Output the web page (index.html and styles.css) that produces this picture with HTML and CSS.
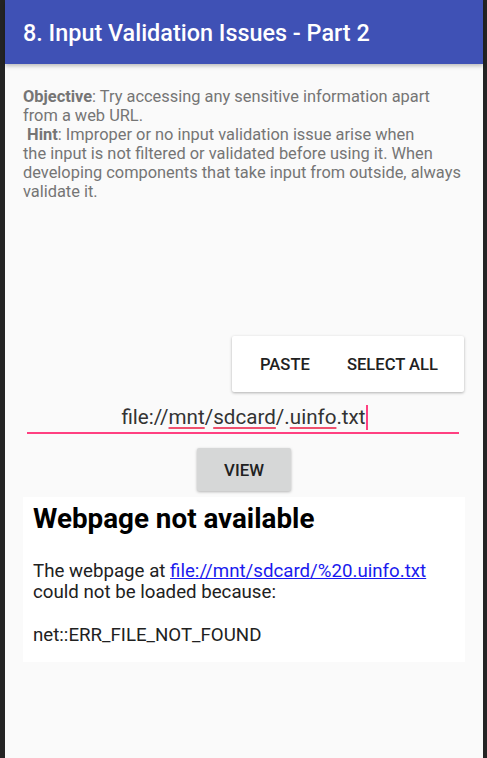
FILE: index.html
```html
<!DOCTYPE html>
<html>
<head>
<meta charset="utf-8">
<link rel="stylesheet" href="styles.css">
</head>
<body>
<div class="frame">
  <div class="app">
    <header class="appbar">
      <h1 class="title">8. Input Validation Issues - Part 2</h1>
    </header>
    <main class="content">
      <p class="desc"><b>Objective</b>: Try accessing any sensitive information apart<br>from a web URL.<br>&nbsp;<b>Hint</b>: Improper or no input validation issue arise when<br>the input is not filtered or validated before using it. When<br>developing components that take input from outside, always<br>validate it.</p>
      <div class="menu-row">
        <div class="menu">
          <span class="menu-item">PASTE</span>
          <span class="menu-item">SELECT ALL</span>
        </div>
      </div>
      <div class="field">
        <span class="field-text">file://<span class="spell">mnt</span>/<span class="spell">sdcard</span>/.<span class="spell">uinfo</span>.txt</span><span class="cursor"></span>
      </div>
      <div class="btn-row">
        <button class="btn">VIEW</button>
      </div>
      <section class="webview">
        <h2 class="wv-title">Webpage not available</h2>
        <p class="wv-text wv-first">The webpage at <a class="wv-link" href="#">file://mnt/sdcard/%20.uinfo.txt</a><br>could not be loaded because:</p>
        <p class="wv-text">net::ERR_FILE_NOT_FOUND</p>
      </section>
    </main>
  </div>
</div>
</body>
</html>
```

FILE: styles.css
```css
html, body {
  margin: 0;
  padding: 0;
  height: 100%;
}
body {
  background: #242424;
  font-family: Roboto, "Noto Sans", sans-serif;
}
.frame {
  display: flex;
  height: 758px;
  padding-left: 5px;
}
.app {
  width: 478px;
  background: #fafafa;
  display: flex;
  flex-direction: column;
}
.appbar {
  height: 64px;
  background: #3f51b5;
  display: flex;
  align-items: center;
  padding-left: 18px;
  box-shadow: 0 2px 4px rgba(0,0,0,0.25);
  position: relative;
  z-index: 1;
}
.title {
  margin: 0;
  color: #fff;
  font-size: 23.4px;
  font-weight: 500;
  padding-top: 2px;
}
.content {
  display: flex;
  flex-direction: column;
  padding: 0 18px;
}
.desc {
  margin: 23px 0 0 0;
  color: #757575;
  font-size: 16.4px;
  line-height: 19px;
}
.desc b {
  font-weight: 700;
}
.menu-row {
  display: flex;
  justify-content: flex-end;
  margin-top: 135px;
  padding-right: 1px;
}
.menu {
  width: 232px;
  height: 56px;
  background: #fff;
  box-shadow: 0 1px 3px rgba(0,0,0,0.3);
  border-radius: 2px;
  display: flex;
  align-items: center;
  padding-left: 28px;
  gap: 37px;
  box-sizing: border-box;
}
.menu-item {
  font-size: 16.6px;
  font-weight: 500;
  color: #212121;
  padding-top: 1px;
}
.field {
  margin: 8px 6px 0 4px;
  height: 28px;
  border-bottom: 2px solid #ff4081;
  display: flex;
  justify-content: center;
  align-items: flex-end;
  padding-bottom: 4px;
}
.field-text {
  font-size: 20.6px;
  color: #333;
  line-height: 22px;
  padding-left: 3px;
}
.spell {
  text-decoration: underline;
  text-decoration-color: #f0506e;
  text-decoration-thickness: 1.5px;
  text-underline-offset: 3px;
}
.cursor {
  width: 2px;
  height: 25px;
  background: #ff4081;
  margin-left: 0;
  margin-bottom: -2px;
}
.btn-row {
  display: flex;
  justify-content: center;
  margin-top: 14px;
}
.btn {
  width: 94px;
  height: 43px;
  background: #d6d7d7;
  border: none;
  border-radius: 2px;
  box-shadow: 0 1px 3px rgba(0,0,0,0.28);
  font-family: Roboto, sans-serif;
  font-size: 16.8px;
  font-weight: 500;
  color: #212121;
  padding: 0;
}
.webview {
  margin-top: 6px;
  background: #fff;
  height: 165px;
  padding: 6px 10px 0 10px;
  box-sizing: border-box;
}
.wv-title {
  margin: 0;
  font-size: 27.8px;
  font-weight: 700;
  color: #000;
  line-height: 32px;
}
.wv-text {
  margin: 22px 0 0 0;
  font-size: 18.7px;
  line-height: 21px;
  color: #212121;
}
.wv-first {
  margin-top: 26px;
}
.wv-link {
  color: #1a1aee;
}
```
